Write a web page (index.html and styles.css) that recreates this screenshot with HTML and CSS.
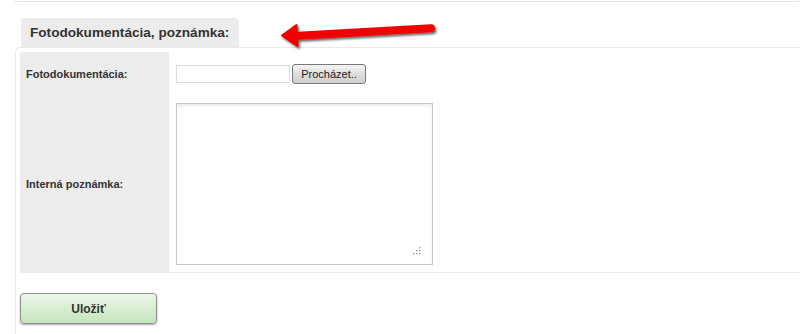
FILE: index.html
```html
<!DOCTYPE html>
<html lang="sk">
<head>
<meta charset="utf-8">
<title>Fotodokumentácia</title>
<link rel="stylesheet" href="styles.css">
</head>
<body>
<div class="page">
  <div class="prev-card"></div>
  <div class="section">
    <div class="tab">Fotodokumentácia, poznámka:</div>
    <svg class="arrow" width="170" height="40" viewBox="0 0 170 40" aria-hidden="true">
      <defs>
        <filter id="sh" x="-20%" y="-50%" width="140%" height="200%">
          <feDropShadow dx="1.5" dy="2" stdDeviation="1.2" flood-color="#000" flood-opacity="0.6"/>
        </filter>
      </defs>
      <g filter="url(#sh)">
        <path d="M22 21 L159 13.3" stroke="#f00000" stroke-width="8" stroke-linecap="round" fill="none"/>
        <path d="M10 20.5 L24.5 10 L25.5 31 Z" fill="#f00000" stroke="#f00000" stroke-width="2" stroke-linejoin="round"/>
      </g>
    </svg>
    <div class="panel">
      <div class="form">
        <div class="row row-file">
          <div class="label">Fotodokumentácia:</div>
          <div class="field">
            <input class="file-name" type="text" readonly>
            <button class="browse" type="button">Procházet..</button>
          </div>
        </div>
        <div class="row row-note">
          <div class="label">Interná poznámka:</div>
          <div class="field">
            <div class="ta-wrap">
              <textarea class="note"></textarea>
              <svg class="grip" width="8" height="8" viewBox="0 0 8 8" aria-hidden="true">
                <rect x="6" y="0" width="1.4" height="1.4" fill="#999"/>
                <rect x="6" y="3" width="1.4" height="1.4" fill="#999"/>
                <rect x="3" y="3" width="1.4" height="1.4" fill="#999"/>
                <rect x="6" y="6" width="1.4" height="1.4" fill="#999"/>
                <rect x="3" y="6" width="1.4" height="1.4" fill="#999"/>
                <rect x="0" y="6" width="1.4" height="1.4" fill="#999"/>
              </svg>
            </div>
          </div>
        </div>
      </div>
      <div class="actions">
        <button class="save" type="button">Uložiť</button>
      </div>
    </div>
  </div>
</div>
</body>
</html>
```

FILE: styles.css
```css
html, body {
  margin: 0;
  padding: 0;
  background: #fff;
}
body {
  font-family: "Liberation Sans", Arial, sans-serif;
  color: #333;
  overflow: hidden;
}
.page {
  width: 800px;
  height: 334px;
  overflow: hidden;
}
.prev-card {
  margin-left: 15px;
  height: 1px;
  border: 1px solid #e6e6e6;
  border-top: none;
  border-bottom-left-radius: 4px;
}
.section {
  position: relative;
  margin-top: 16px;
  margin-left: 15px;
}
.tab {
  display: inline-block;
  margin-left: 6px;
  width: 209px;
  height: 29px;
  padding-left: 9px;
  box-sizing: content-box;
  background: #ececec;
  border-radius: 4px 4px 0 0;
  font-size: 13.6px;
  font-weight: bold;
  line-height: 30px;
  color: #333;
  vertical-align: top;
}
.arrow {
  position: absolute;
  left: 257px;
  top: -3px;
}
.panel {
  border-top: 1px solid #e9e9e9;
  border-left: 1px solid #e9e9e9;
  border-top-left-radius: 5px;
  padding: 4px 0 0 4px;
  height: 300px;
}
.form {
  border-bottom: 1px solid #ececec;
}
.row {
  display: flex;
}
.label {
  width: 149px;
  flex: none;
  background: #ececec;
  font-size: 11px;
  font-weight: bold;
  padding-left: 6px;
  box-sizing: border-box;
  display: flex;
  align-items: center;
}
.field {
  padding: 0 7px;
  display: flex;
  align-items: center;
}
.row-file {
  height: 44px;
}
.row-note .field {
  padding-top: 7px;
  padding-bottom: 7px;
}
.file-name {
  width: 114px;
  height: 18px;
  box-sizing: border-box;
  border: 1px solid #dcdcdc;
  margin: 0 2px 0 0;
  padding: 0;
  background: #fff;
  outline: none;
}
.browse {
  width: 74px;
  height: 20px;
  box-sizing: border-box;
  margin: 0;
  padding: 0;
  border: 1px solid #777;
  border-radius: 3px;
  background: linear-gradient(#f4f4f4, #dedede 50%, #cfcfcf);
  font-family: "Liberation Sans", Arial, sans-serif;
  font-size: 11px;
  color: #222;
  line-height: 18px;
}
.ta-wrap {
  position: relative;
  width: 257px;
  height: 162px;
}
.note {
  display: block;
  width: 257px;
  height: 162px;
  box-sizing: border-box;
  margin: 0;
  border: 1px solid #c8c8c8;
  box-shadow: inset 0 3px 4px -2px rgba(0, 0, 0, 0.12);
  resize: none;
  background: #fff;
  outline: none;
}
.grip {
  position: absolute;
  right: 12px;
  bottom: 10px;
}
.actions {
  padding-top: 20px;
}
.save {
  width: 137px;
  height: 31px;
  box-sizing: border-box;
  margin: 0;
  border: 1px solid #8e8e8e;
  border-radius: 4px;
  background: linear-gradient(#ecf7e9, #d3ecce 60%, #c6e4bf);
  box-shadow: 0 1px 2px rgba(0, 0, 0, 0.35);
  font-family: "Liberation Sans", Arial, sans-serif;
  font-size: 12px;
  font-weight: bold;
  color: #333;
}
```
